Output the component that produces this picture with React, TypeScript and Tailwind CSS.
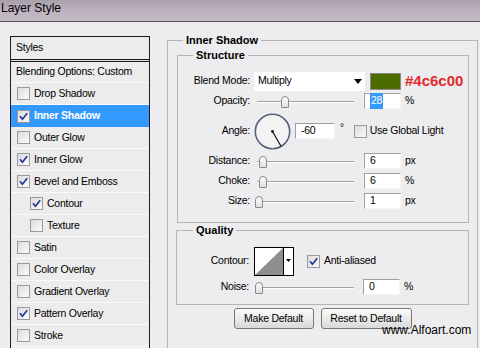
import React from 'react';

const font = { fontFamily: '"Liberation Sans", Arial, sans-serif' };

const Box = ({ on }: { on?: boolean }) => (
  <span className="flex h-[13px] w-[13px] shrink-0 items-center justify-center border border-[#9a9a9a] bg-linear-to-br from-[#dcdcdc] to-[#fbfbfb]">
    {on && (
      <svg viewBox="0 0 11 11" className="h-[11px] w-[11px]">
        <path d="M2 5.2 L4.4 8.2 L9.2 2.2" fill="none" stroke="#23349a" strokeWidth="1.7" />
      </svg>
    )}
  </span>
);

const Slider = ({ pos }: { pos: number }) => (
  <div className="relative h-[20px] w-[106px] shrink-0">
    <div className="absolute left-[3px] right-[6px] top-[10px] h-[2px] border-t border-b border-t-[#a3a3a3] border-b-white" />
    <div
      className="absolute top-[5px] h-[12px] w-[8px] rounded-t-[4px] rounded-b-[1px] border border-[#8a8a8a] bg-linear-to-b from-white to-[#dedede]"
      style={{ left: pos }}
    />
  </div>
);

const Field = ({ value, w = 37, sel }: { value: string; w?: number; sel?: boolean }) => (
  <div
    className="flex h-[16px] shrink-0 items-center border border-t-[#a0a0a0] border-l-[#a0a0a0] border-b-[#f6f6f6] border-r-[#f6f6f6] bg-white pl-[5px]"
    style={{ width: w }}
  >
    {sel ? <span className="bg-[#3399ff] px-[1px] text-white">{value}</span> : value}
  </div>
);

const Label = ({ children }: { children: React.ReactNode }) => (
  <div className="w-[73px] shrink-0 pr-[1px] text-right">{children}</div>
);

const SliderRow = ({ label, pos, value, unit, sel }: { label: string; pos: number; value: string; unit: string; sel?: boolean }) => (
  <div className="flex h-[20px] items-center">
    <Label>{label}</Label>
    <div className="ml-[3px]">
      <Slider pos={pos} />
    </div>
    <div className="ml-[4px]">
      <Field value={value} sel={sel} />
    </div>
    <span className="ml-[4px]">{unit}</span>
  </div>
);

const styles: { name: string; on?: boolean; active?: boolean; sub?: boolean }[] = [
  { name: 'Drop Shadow' },
  { name: 'Inner Shadow', on: true, active: true },
  { name: 'Outer Glow' },
  { name: 'Inner Glow', on: true },
  { name: 'Bevel and Emboss', on: true },
  { name: 'Contour', on: true, sub: true },
  { name: 'Texture', sub: true },
  { name: 'Satin' },
  { name: 'Color Overlay' },
  { name: 'Gradient Overlay' },
  { name: 'Pattern Overlay', on: true },
  { name: 'Stroke' },
];

export default function App() {
  return (
    <div className="h-[348px] w-[480px] overflow-hidden bg-[#edecee] text-[10.5px] tracking-[-0.25px] text-black" style={font}>
      <div className="h-[22px] border-b border-[#5a5060] bg-linear-to-b from-[#a99fab] via-[#bdb2bd] to-[#c3bac4] text-[12px] leading-[14px] tracking-normal">
        <span className="inline-block pl-[1px] pt-[1px]">Layer Style</span>
      </div>

      <div className="relative flex">
        {/* styles list */}
        <div className="ml-[10px] mt-[14px] w-[140px] shrink-0 border border-[#1c1c1c] bg-[#ececec]">
          <div className="flex h-[23px] items-center border-b border-[#1c1c1c] pl-[5px]">Styles</div>
          <div className="h-[1px] bg-[#d8d8d8]" />
          <div className="flex h-[22px] items-center border-t border-b border-t-[#1c1c1c] border-b-[#fafafa] pl-[5px]">
            Blending Options: Custom
          </div>
          {styles.map((s) => (
            <div
              key={s.name}
              className={
                s.active
                  ? 'flex h-[22px] items-center gap-[4px] bg-[#3399ff] font-bold text-white'
                  : 'flex h-[22px] items-center gap-[4px] border-b border-[#fafafa]'
              }
            >
              <div className={s.sub ? 'pl-[19px]' : 'pl-[6px]'}>
                <Box on={s.on} />
              </div>
              <span>{s.name}</span>
            </div>
          ))}
        </div>

        {/* settings */}
        <div className="ml-[17px] mt-[12px] w-[311px] shrink-0">
          <fieldset className="h-[400px] border border-[#b5b5b5]">
            <legend className="ml-[15px] px-[3px] text-[11px] font-bold leading-[13px] tracking-normal">Inner Shadow</legend>

            <fieldset className="ml-[9px] mr-[8px] mt-[2px] border border-[#b5b5b5] pb-[11px] pt-[9px]">
              <legend className="ml-[15px] px-[3px] text-[11px] font-bold leading-[13px] tracking-normal">Structure</legend>

              <div className="flex h-[20px] items-center">
                <Label>Blend Mode:</Label>
                <div className="ml-[3px] flex h-[19px] w-[111px] items-center justify-between bg-white pl-[4px] pr-[3px]">
                  <span>Multiply</span>
                  <svg width="8" height="5" viewBox="0 0 8 5">
                    <path d="M0 0 H8 L4 5 Z" fill="#000" />
                  </svg>
                </div>
                <div className="ml-[5px] h-[17px] w-[31px] border border-[#8a8a8a] bg-[#4c6c00]" />
                <span className="ml-[4px] text-[15px] font-bold tracking-normal text-[#e22b2b]">#4c6c00</span>
              </div>

              <SliderRow label="Opacity:" pos={27} value="28" unit="%" sel />

              <div className="flex h-[40px] items-center">
                <Label>Angle:</Label>
                <svg width="37" height="37" viewBox="0 0 37 37" className="ml-[3px] shrink-0">
                  <circle cx="18.5" cy="18.5" r="17.2" fill="#f3f3f3" stroke="#56627c" strokeWidth="1.6" />
                  <line x1="18.5" y1="18.5" x2="27" y2="33.3" stroke="#111" strokeWidth="1.2" />
                  <circle cx="18.5" cy="18.5" r="1.4" fill="#111" />
                </svg>
                <div className="ml-[4px]">
                  <Field value="-60" w={40} />
                </div>
                <span className="ml-[5px] self-start pt-[9px] text-[10px]">°</span>
                <div className="ml-[10px] flex items-center gap-[3px]">
                  <Box />
                  <span>Use Global Light</span>
                </div>
              </div>

              <SliderRow label="Distance:" pos={5} value="6" unit="px" />
              <SliderRow label="Choke:" pos={5} value="6" unit="%" />
              <SliderRow label="Size:" pos={1} value="1" unit="px" />
            </fieldset>

            <fieldset className="ml-[8px] mr-[8px] mt-[1px] border border-[#b5b5b5] pb-[7px] pt-[8px]">
              <legend className="ml-[16px] px-[3px] text-[11px] font-bold leading-[13px] tracking-normal">Quality</legend>

              <div className="flex h-[32px] items-center">
                <Label>Contour:</Label>
                <svg width="40" height="29" viewBox="0 0 40 29" className="ml-[4px] shrink-0">
                  <rect x="0.5" y="0.5" width="39" height="28" fill="#fff" stroke="#000" />
                  <path d="M1 28 L29 1 L29 28 Z" fill="#8e8e8e" />
                  <line x1="29.5" y1="0.5" x2="29.5" y2="28.5" stroke="#000" />
                  <path d="M32 12 H37 L34.5 15 Z" fill="#000" />
                </svg>
                <div className="ml-[13px] flex items-center gap-[4px]">
                  <Box on />
                  <span>Anti-aliased</span>
                </div>
              </div>

              <div className="flex h-[20px] items-center">
                <Label>Noise:</Label>
                <div className="ml-[4px]">
                  <Slider pos={1} />
                </div>
                <div className="ml-[3px]">
                  <Field value="0" />
                </div>
                <span className="ml-[4px]">%</span>
              </div>
            </fieldset>

            <div className="mt-[3px] flex justify-center gap-[7px]">
              <button className="h-[21px] w-[80px] rounded-[3px] border border-[#777] bg-linear-to-b from-[#fbfbfb] to-[#d9d9d9]">
                Make Default
              </button>
              <button className="h-[21px] w-[91px] rounded-[3px] border border-[#777] bg-linear-to-b from-[#fbfbfb] to-[#d9d9d9]">
                Reset to Default
              </button>
            </div>
          </fieldset>
        </div>

        <span className="absolute left-[382px] top-[301px] text-[12px] leading-[15px] tracking-normal">www.Alfoart.com</span>
      </div>
    </div>
  );
}
